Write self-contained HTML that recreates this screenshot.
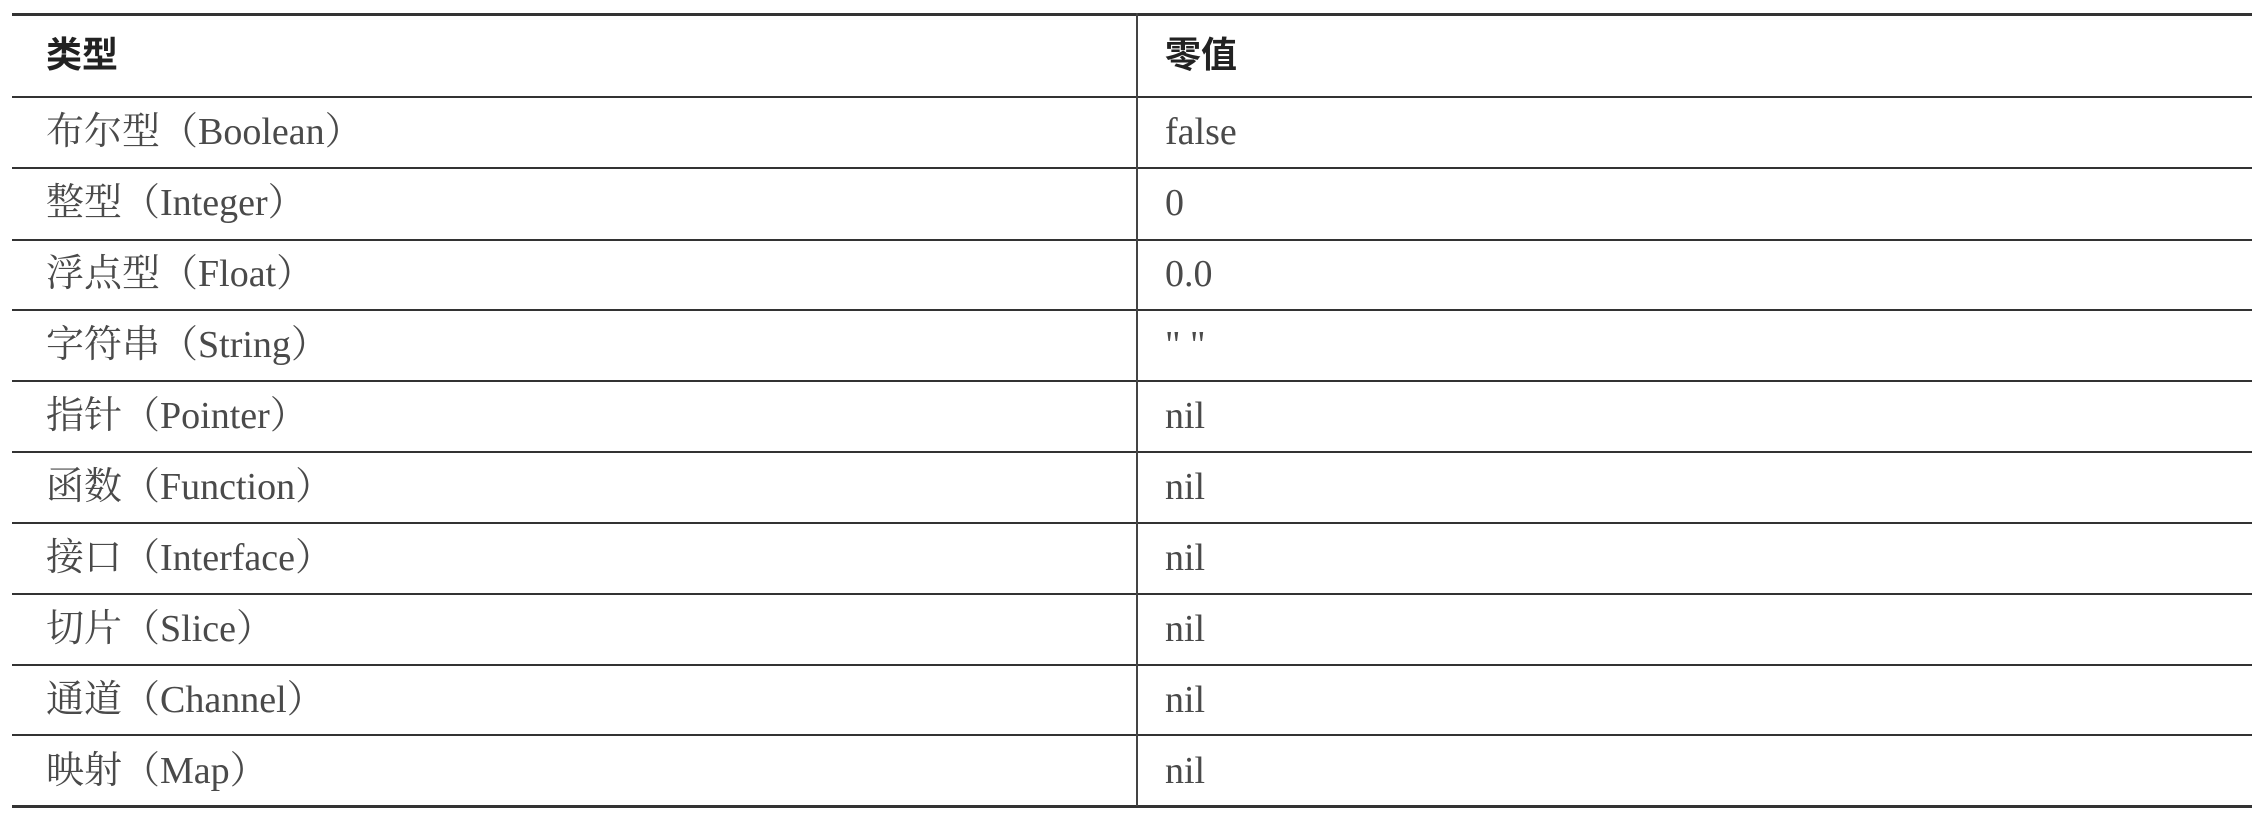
<!DOCTYPE html>
<html><head><meta charset="utf-8">
<style>
html,body{margin:0;padding:0;background:#fff;width:2262px;height:818px;overflow:hidden;}
.wrap{position:absolute;left:12px;top:0;width:2240px;}
.hl{position:absolute;left:0;width:2240px;background:#333;}
.vl{position:absolute;left:1124px;top:13px;width:2px;height:793px;background:#444;}
.t{position:absolute;font-family:"Liberation Serif","Noto Serif CJK SC",serif;font-size:38px;color:#4a4a4a;white-space:nowrap;line-height:1;}
.h{font-family:"Liberation Sans","Noto Sans CJK SC",sans-serif;font-weight:bold;color:#222;font-size:36px;}
</style></head><body>
<div class="wrap">
<div class="hl" style="top:13px;height:3px"></div>
<div class="hl" style="top:96px;height:2px"></div>
<div class="hl" style="top:167px;height:2px"></div>
<div class="hl" style="top:239px;height:2px"></div>
<div class="hl" style="top:309px;height:2px"></div>
<div class="hl" style="top:380px;height:2px"></div>
<div class="hl" style="top:451px;height:2px"></div>
<div class="hl" style="top:522px;height:2px"></div>
<div class="hl" style="top:593px;height:2px"></div>
<div class="hl" style="top:664px;height:2px"></div>
<div class="hl" style="top:734px;height:2px"></div>
<div class="hl" style="top:805px;height:3px"></div>
<div class="vl"></div>
</div>
<div class="t h" style="left:46px;top:37px">类型</div>
<div class="t h" style="left:1165px;top:37px">零值</div>
<div class="t" style="left:46px;top:113px">布尔型（Boolean）</div><div class="t" style="left:1165px;top:113px">false</div>
<div class="t" style="left:46px;top:184px">整型（Integer）</div><div class="t" style="left:1165px;top:184px">0</div>
<div class="t" style="left:46px;top:255px">浮点型（Float）</div><div class="t" style="left:1165px;top:255px">0.0</div>
<div class="t" style="left:46px;top:326px">字符串（String）</div><div class="t" style="left:1165px;top:326px">" "</div>
<div class="t" style="left:46px;top:397px">指针（Pointer）</div><div class="t" style="left:1165px;top:397px">nil</div>
<div class="t" style="left:46px;top:468px">函数（Function）</div><div class="t" style="left:1165px;top:468px">nil</div>
<div class="t" style="left:46px;top:539px">接口（Interface）</div><div class="t" style="left:1165px;top:539px">nil</div>
<div class="t" style="left:46px;top:610px">切片（Slice）</div><div class="t" style="left:1165px;top:610px">nil</div>
<div class="t" style="left:46px;top:681px">通道（Channel）</div><div class="t" style="left:1165px;top:681px">nil</div>
<div class="t" style="left:46px;top:752px">映射（Map）</div><div class="t" style="left:1165px;top:752px">nil</div>
</body></html>
